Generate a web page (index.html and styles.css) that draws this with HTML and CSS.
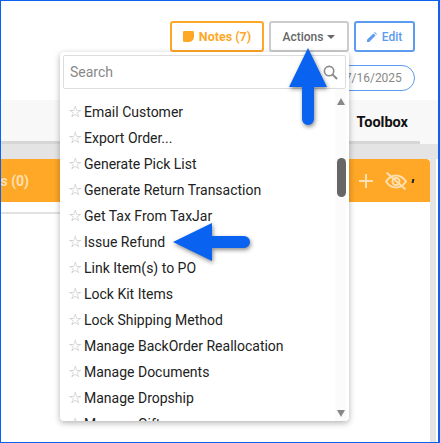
FILE: index.html
```html
<!DOCTYPE html>
<html lang="en">
<head>
  <meta charset="UTF-8">
  <title>Order Actions</title>
  <link rel="stylesheet" href="styles.css">
</head>
<body>
  <div class="frame">
    <div class="top-bar">
      <button class="btn btn-notes">
        <svg class="btn-icon" viewBox="0 0 14 14"><path d="M1.500 0h11A1.500 1.500 0 0 1 14 1.500V9l-5 5H1.500A1.500 1.500 0 0 1 0 12.500v-11A1.500 1.500 0 0 1 1.500 0z" fill="#ffa726"/><path d="M10 14v-3.500a.5.5 0 0 1 .5-.5H14z" fill="#ffa726"/></svg>
        Notes (7)
      </button>
      <button class="btn btn-actions">Actions <span class="caret"></span></button>
      <button class="btn btn-edit">
        <svg class="btn-icon btn-icon-edit" viewBox="0 0 14 14"><path d="M0 14v-3L9 2l3 3-9 9zM10 1l1-1 3 3-1 1z" fill="#5c9cf0"/></svg>
        Edit
      </button>
    </div>

    <div class="date-row"><span class="date-pill">07/16/2025</span></div>

    <div class="table-head">
      <span class="toolbox-label">Toolbox</span>
      <div class="head-strip"></div>
    </div>
    <div class="gray-bar"></div>
    <div class="table-body">
      <div class="orange-bar">
        <span class="orange-title">Items (0)</span>
        <span class="orange-tools">
          <svg class="tool-plus" viewBox="0 0 14 14"><path d="M7 0v14M0 7h14" stroke="#ffe0b2" stroke-width="2" fill="none"/></svg>
          <svg class="tool-eye" viewBox="0 0 22 18"><g fill="none" stroke="#ffe0b2" stroke-width="1.900"><path d="M1 9.500C4 5 7.500 3.500 11 3.500s7 1.500 10 6c-3 4.500-6.500 6-10 6s-7-1.500-10-6z"/><circle cx="11" cy="9.500" r="3.500"/><path d="M1.500 0.500l19 17"/></g></svg>
          <span class="tool-mark"></span>
        </span>
      </div>
      <div class="under-line"></div>
    </div>

    <div class="dropdown">
      <div class="search-box">
        <span class="search-text">Search</span>
        <svg class="search-icon" viewBox="0 0 16 16"><circle cx="6.500" cy="6.500" r="5" fill="none" stroke="#8a8a8a" stroke-width="1.700"/><path d="M10 10l5 5" stroke="#8a8a8a" stroke-width="2.200"/></svg>
      </div>
      <div class="list-wrap">
        <ul class="menu-list">
          <li>Email Customer</li>
          <li>Export Order...</li>
          <li>Generate Pick List</li>
          <li>Generate Return Transaction</li>
          <li>Get Tax From TaxJar</li>
          <li>Issue Refund</li>
          <li>Link Item(s) to PO</li>
          <li>Lock Kit Items</li>
          <li>Lock Shipping Method</li>
          <li>Manage BackOrder Reallocation</li>
          <li>Manage Documents</li>
          <li>Manage Dropship</li>
          <li>Manage Gift</li>
        </ul>
        <div class="scroll-track">
          <span class="scroll-up"></span>
          <span class="scroll-thumb"></span>
          <span class="scroll-down"></span>
        </div>
      </div>
    </div>

    <svg class="arrow arrow-up" viewBox="0 0 40 80"><path d="M20 1L39 40H26V72a6 6 0 0 1-12 0V40H1z" fill="#0a63f0"/></svg>
    <svg class="arrow arrow-left" viewBox="0 0 80 40"><path d="M1 20L40 1V14H72a6 6 0 0 1 0 12H40V39z" fill="#0a63f0"/></svg>
  </div>
</body>
</html>
```

FILE: styles.css
```css
* {
  box-sizing: border-box;
}

html, body {
  margin: 0;
  padding: 0;
}

body {
  width: 440px;
  height: 443px;
  overflow: hidden;
  font-family: Roboto, "Liberation Sans", sans-serif;
  background: #fff;
}

.frame {
  position: relative;
  width: 440px;
  height: 443px;
  border: 1px solid #0a63f0;
  border-right-width: 2px;
  overflow: hidden;
}

.top-bar {
  display: flex;
  justify-content: flex-end;
  gap: 5px;
  padding: 20px 23px 0 0;
}

.btn {
  display: flex;
  align-items: center;
  justify-content: center;
  gap: 5px;
  height: 31px;
  padding: 0;
  background: #fff;
  border-radius: 3px;
  border: 2px solid #ccc;
  font-family: inherit;
  font-size: 12px;
  font-weight: 500;
}

.btn-notes {
  width: 94px;
  border-color: #ffa726;
  color: #ffa726;
  font-size: 12.5px;
  font-weight: 700;
}

.btn-actions {
  width: 80px;
  gap: 4px;
  color: #666;
}

.btn-edit {
  width: 61px;
  border-color: #5c9cf0;
  color: #5c9cf0;
}

.btn-icon {
  width: 11px;
  height: 11px;
}

.btn-icon-edit {
  width: 10px;
  height: 10px;
}

.caret {
  width: 0;
  height: 0;
  border-left: 4px solid transparent;
  border-right: 4px solid transparent;
  border-top: 4px solid #666;
}

.date-row {
  display: flex;
  justify-content: flex-end;
  padding: 13px 23px 0 0;
}

.date-pill {
  width: 90px;
  height: 26px;
  line-height: 24px;
  padding-left: 12px;
  border: 1px solid #5c9cf0;
  border-radius: 13px;
  font-size: 12px;
  color: #888;
}

.table-head {
  position: relative;
  display: flex;
  justify-content: flex-end;
  align-items: center;
  height: 44px;
  margin-top: 9px;
  padding-right: 30px;
  background: #f8f8f8;
}

.toolbox-label {
  font-size: 14.5px;
  font-weight: 700;
  color: #111;
}

.head-strip {
  position: absolute;
  left: 0;
  bottom: 0;
  width: 419px;
  height: 3px;
  background: #d6d6d6;
}

.gray-bar {
  height: 15px;
  background: #e4e4e4;
}

.table-body {
  height: 283px;
  margin-right: 2px;
  border-right: 6px solid #e4e4e4;
}

.orange-bar {
  display: flex;
  justify-content: space-between;
  align-items: center;
  height: 43px;
  background: #ffa726;
  color: #ffe0b2;
  font-size: 14px;
  font-weight: 700;
  border-radius: 0 4px 0 0;
}

.orange-title {
  margin-left: -29px;
}

.orange-tools {
  display: flex;
  align-items: center;
  padding-right: 16px;
}

.tool-plus {
  width: 14px;
  height: 14px;
  margin-right: 12px;
}

.tool-eye {
  width: 22px;
  height: 18px;
  margin-right: 5px;
}

.tool-mark {
  width: 2px;
  height: 4px;
  background: #222;
  transform: skewX(-12deg);
}

.under-line {
  width: 60px;
  height: 2px;
  margin-top: 10px;
  background: #e2e2e2;
}

.dropdown {
  position: absolute;
  left: 59px;
  top: 51px;
  width: 289px;
  height: 369px;
  padding: 3px 3px 0;
  background: #fff;
  border-radius: 4px;
  box-shadow: 0 2px 6px rgba(0, 0, 0, 0.3);
  overflow: hidden;
}

.search-box {
  position: relative;
  height: 34px;
  padding: 0 6px;
  line-height: 32px;
  border: 1px solid #ddd;
  border-radius: 2px;
  font-size: 14px;
  color: #888;
}

.search-icon {
  position: absolute;
  right: 7px;
  top: 9px;
  width: 15px;
  height: 15px;
}

.list-wrap {
  position: relative;
  height: 332px;
  overflow: hidden;
}

.menu-list {
  list-style: none;
  margin: 0;
  padding: 10px 0 0 5px;
}

.menu-list li {
  display: flex;
  align-items: center;
  height: 26px;
  font-size: 14px;
  color: #222;
}

.menu-list li::before {
  content: "☆";
  width: 16px;
  font-family: "DejaVu Sans", sans-serif;
  font-size: 16px;
  line-height: 1;
  color: #bdbdbd;
}

.scroll-track {
  position: absolute;
  right: 0;
  top: 0;
  bottom: 0;
  width: 11px;
  background: #fbfbfb;
}

.scroll-up, .scroll-down {
  position: absolute;
  left: 2px;
  width: 0;
  height: 0;
  border-left: 4.500px solid transparent;
  border-right: 4.500px solid transparent;
}

.scroll-up {
  top: 9px;
  border-bottom: 7px solid #888;
}

.scroll-down {
  bottom: 4px;
  border-top: 7px solid #888;
}

.scroll-thumb {
  position: absolute;
  left: 2px;
  top: 69px;
  width: 9px;
  height: 39px;
  border-radius: 5px;
  background: #666;
}

.arrow {
  position: absolute;
  filter: drop-shadow(1px 2px 2px rgba(0, 0, 0, 0.45));
}

.arrow-up {
  left: 287px;
  top: 46px;
  width: 40px;
  height: 80px;
}

.arrow-left {
  left: 171px;
  top: 221px;
  width: 80px;
  height: 40px;
}
```
